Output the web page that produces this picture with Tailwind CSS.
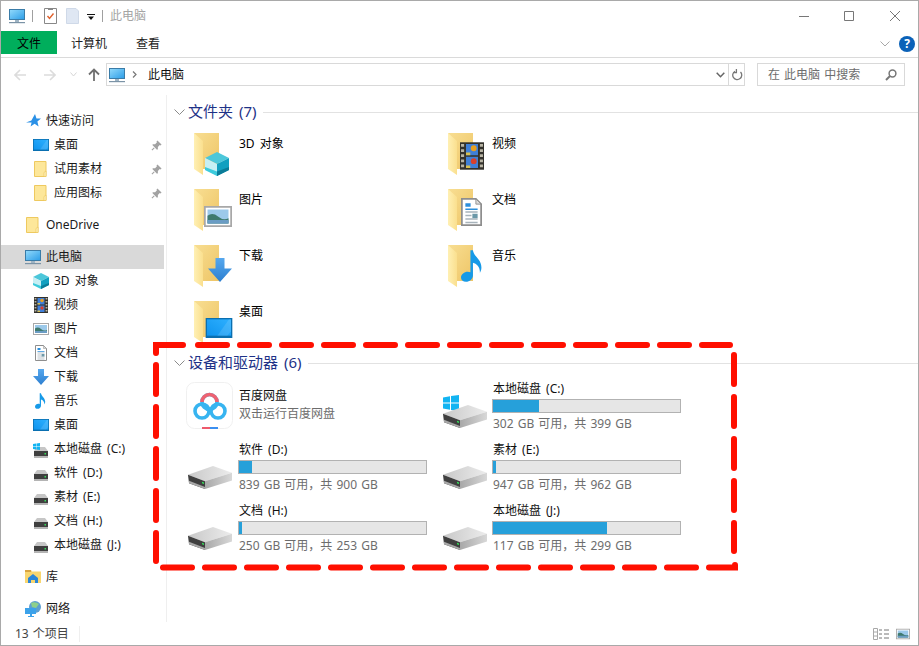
<!DOCTYPE html>
<html lang="zh-CN">
<head>
    <meta charset="UTF-8">
    <meta name="viewport" content="width=device-width, initial-scale=1.0">
    <title>此电脑</title>
    <script src="https://cdn.jsdelivr.net/npm/@tailwindcss/browser@4"></script>
</head>
<body class="bg-white font-['Noto_Sans','Noto_Sans_CJK_SC',sans-serif] text-[12px] text-black [word-spacing:2px]">
    <!-- shared icons -->
    <svg class="absolute w-0 h-0">
        <defs>
            <linearGradient id="gBack" x1="0" y1="0" x2="1" y2="1"><stop offset="0" stop-color="#f8de92"/><stop offset="1" stop-color="#eec566"/></linearGradient>
            <linearGradient id="gFlap" x1="0" y1="0" x2="1" y2="0"><stop offset="0" stop-color="#fff0b4"/><stop offset="1" stop-color="#fadf8e"/></linearGradient>
            <linearGradient id="gArrow" x1="0" y1="0" x2="0" y2="1"><stop offset="0" stop-color="#56a8ee"/><stop offset="1" stop-color="#2d7fd0"/></linearGradient>
            <linearGradient id="gScreen" x1="0" y1="0" x2="1" y2="1"><stop offset="0" stop-color="#8fd8fb"/><stop offset="1" stop-color="#2f9fe8"/></linearGradient>
            <linearGradient id="gDesk" x1="0" y1="1" x2="1" y2="0"><stop offset="0" stop-color="#0f94ee"/><stop offset="1" stop-color="#2eb0ff"/></linearGradient>
            <linearGradient id="gTop" x1="0" y1="0" x2="1" y2="0"><stop offset="0" stop-color="#c8c8c8"/><stop offset="1" stop-color="#ececec"/></linearGradient>
            <linearGradient id="gSide" x1="0" y1="0" x2="1" y2="0"><stop offset="0" stop-color="#a8a8a8"/><stop offset="1" stop-color="#d8d8d8"/></linearGradient>
        </defs>
        <symbol id="folder" viewBox="0 0 44 48">
            <path d="M0 0H25V36H9Z" fill="url(#gBack)"/>
            <path d="M0 0L9 8V42L0 36Z" fill="url(#gFlap)"/>
        </symbol>
        <symbol id="pc" viewBox="0 0 16 16">
            <path d="M0 1H16V12H0Z" fill="#3a7ca8"/>
            <path d="M1 2H15V11H1Z" fill="url(#gScreen)"/>
            <path d="M6 12H10V14H6Z" fill="#9fb4c4"/>
            <path d="M0 14H16V15.2H0Z" fill="#7b93a6"/>
        </symbol>
        <symbol id="hdd" viewBox="0 0 44 24" preserveAspectRatio="none">
            <path d="M0 9L25 0L44 7L17 16Z" fill="url(#gTop)"/>
            <path d="M0 9L17 16V24L1 18Z" fill="#3f3f3f"/>
            <path d="M1 15.5L17 22V24L1 18Z" fill="#a8a8a8"/>
            <path d="M17 16L44 7V15L17 24Z" fill="url(#gSide)"/>
            <path d="M14 16.5L16 17.2V18.8L14 18.1Z" fill="#35e05a"/>
        </symbol>
        <symbol id="hddsmall" viewBox="0 0 14 11">
            <path d="M3 0H11L14 4H0Z" fill="#c6c6c6"/>
            <path d="M0 4H14V9H0Z" fill="#3f3f3f"/>
            <path d="M0 9H14V11H0Z" fill="#b4b4b4"/>
            <path d="M10.5 6H12V7.5H10.5Z" fill="#35e05a"/>
        </symbol>
        <symbol id="winflag" viewBox="0 0 16 16">
            <path d="M0 2.4L7 1.2V7.4H0ZM8 1L16 0V7.4H8ZM0 8.4H7V14.8L0 13.6ZM8 8.4H16V16L8 15Z" fill="#12b4f2"/>
        </symbol>
        <symbol id="smallfolder" viewBox="0 0 16 16">
            <path d="M1.5 .5H13V15.5H1.5Z" fill="#fde79a" stroke="#eec95f"/>
            <path d="M13 10V15.5H11V11.5Z" fill="#fff3c0" stroke="#eec95f" stroke-width=".7"/>
        </symbol>
        <symbol id="pin" viewBox="0 0 12 12">
            <path d="M7 .5L11.5 5L10.5 6L9.5 5.5L7.5 7.5V10L6.5 10.5L1.5 5.5L2 4.5H4.5L6.5 2.5L6 1.5Z" fill="#a2a2a2"/>
            <path d="M3.5 8.5L1 11" stroke="#a2a2a2" stroke-width="1.2"/>
        </symbol>
        <symbol id="desk" viewBox="0 0 16 12">
            <path d="M0 0H16V12H0Z" fill="#0a6fb0"/>
            <path d="M.8 .8H15.2V10.6H.8Z" fill="url(#gDesk)"/>
            <path d="M7 10.6L14 .8H15.2V8L13 10.6Z" fill="#fff" opacity=".12"/>
        </symbol>
        <symbol id="cube" viewBox="0 0 16 16">
            <path d="M8 0L16 4L8 8L0 4Z" fill="#4cc7da"/>
            <path d="M0 4L8 8V16L0 12Z" fill="#c6eff4"/>
            <path d="M0 10L8 13V16L0 12Z" fill="#3ccbdc"/>
            <path d="M16 4V12L8 16V8Z" fill="#12a0c0"/>
            <path d="M16 10V12L8 16V13Z" fill="#0b7c98"/>
        </symbol>
        <symbol id="film" viewBox="0 0 14 16">
            <path d="M0 0H14V16H0Z" fill="#33312c"/>
            <path d="M.6 1H2.4V2.6H.6ZM.6 4H2.4V5.6H.6ZM.6 7H2.4V8.6H.6ZM.6 10H2.4V11.6H.6ZM.6 13H2.4V14.6H.6ZM11.6 1H13.4V2.6H11.6ZM11.6 4H13.4V5.6H11.6ZM11.6 7H13.4V8.6H11.6ZM11.6 10H13.4V11.6H11.6ZM11.6 13H13.4V14.6H11.6Z" fill="#b8b4a4"/>
            <path d="M3.5 1H10.5V7.5H3.5ZM3.5 8.5H10.5V15H3.5Z" fill="#3f7fd8"/>
            <circle cx="8" cy="3.5" r="1.7" fill="#e8a020"/>
            <circle cx="8" cy="11" r="1.7" fill="#d8402c"/>
            <path d="M3.5 6H6V7.5H3.5ZM3.5 13.5H6V15H3.5Z" fill="#d8c050"/>
        </symbol>
        <symbol id="pic" viewBox="0 0 16 12">
            <path d="M0 0H16V12H0Z" fill="#a8a8a8"/>
            <path d="M1 1H15V11H1Z" fill="#fff"/>
            <path d="M2 2H14V10H2Z" fill="#9cc9ea"/>
            <path d="M2 5.5Q5 3.5 8 6T14 7V10H2Z" fill="#3f7a6e"/>
            <path d="M2 8H14V10H2Z" fill="#6a9cc4"/>
        </symbol>
        <symbol id="doc" viewBox="0 0 12 16">
            <path d="M.5 .5H8.5L11.5 3.5V15.5H.5Z" fill="#fff" stroke="#8e8e8e"/>
            <path d="M8.5 .5V3.5H11.5Z" fill="#dcdcdc" stroke="#8e8e8e" stroke-width=".5"/>
            <path d="M2.5 3H5.5V5H2.5ZM2.5 6H9.5V6.8H2.5Z" fill="#2c8fdc"/>
            <path d="M2.5 8H9.5M2.5 10H6M2.5 12H9.5M2.5 14H9.5" stroke="#a8b4bc" stroke-width=".8"/>
            <path d="M6.5 9H9.5V11.5H6.5Z" fill="#6c98a8"/>
        </symbol>
        <symbol id="down" viewBox="0 0 16 16">
            <path d="M5 0H11V7H16L8 16L0 7H5Z" fill="url(#gArrow)"/>
        </symbol>
        <symbol id="note" viewBox="0 0 14 20">
            <path d="M6 0H7.6C8 4 13 5.5 13 11C13 12.5 12.5 13.5 12 14.5C12.3 11 10 8.5 7.6 8V16C7.6 18.3 5.4 20 3.2 20C1.2 20 0 18.9 0 17.3C0 15.2 2.2 13.6 4.2 13.6C4.9 13.6 5.5 13.8 6 14Z" fill="#169ae8"/>
        </symbol>
    </svg>

    <div class="relative w-[919px] h-[646px] flex flex-col border border-[#a9a9a9] overflow-hidden">
        <!-- title bar -->
        <div class="h-[30px] flex items-center shrink-0 pl-2">
            <svg class="w-4 h-4"><use href="#pc"/></svg>
            <div class="w-px h-3 bg-[#a0a0a0] ml-[7px]"></div>
            <svg class="w-[13px] h-4 ml-[11px]" viewBox="0 0 13 16">
                <path d="M.5 .5H12.5V15.5H.5Z" fill="#fff" stroke="#888"/>
                <path d="M4 .5H9V2H4Z" fill="#888"/>
                <path d="M3.5 8L5.5 10.5L9.5 5.5" fill="none" stroke="#e0602c" stroke-width="1.4"/>
            </svg>
            <svg class="w-[13px] h-4 ml-[9px]" viewBox="0 0 13 16">
                <path d="M.5 .5H10L12.5 3V15.5H.5Z" fill="#dfe7f3" stroke="#cfd9e8"/>
            </svg>
            <svg class="w-[8px] h-[6px] ml-[8px] mt-[2px]" viewBox="0 0 8 6">
                <path d="M0 0H8V1H0ZM1 2.5H7L4 6Z" fill="#111"/>
            </svg>
            <div class="w-px h-3 bg-[#a0a0a0] ml-[7px]"></div>
            <span class="ml-[7px] text-[#a4a4a4]">此电脑</span>
            <div class="ml-auto flex items-center pr-[18px] gap-[35px]">
                <svg class="w-[10px] h-[10px]" viewBox="0 0 10 10"><path d="M0 5.5H10" stroke="#777"/></svg>
                <svg class="w-[10px] h-[10px]" viewBox="0 0 10 10"><path d="M.5 .5H9.5V9.5H.5Z" fill="none" stroke="#777"/></svg>
                <svg class="w-[10px] h-[10px] ml-px" viewBox="0 0 10 10"><path d="M0 0L10 10M10 0L0 10" stroke="#777"/></svg>
            </div>
        </div>
        <!-- ribbon tabs -->
        <div class="h-[27px] flex shrink-0 border-b border-[#dadada]">
            <div class="w-[56px] h-[23px] pt-[2px] bg-[#00ae5c] flex items-center justify-center">文件</div>
            <div class="h-[23px] pt-[2px] flex items-center ml-[14px] text-[#222]">计算机</div>
            <div class="h-[23px] pt-[2px] flex items-center ml-[29px] text-[#222]">查看</div>
            <div class="ml-auto flex items-center h-[26px] pr-[3px]">
                <svg class="w-[10px] h-[6px]" viewBox="0 0 10 6"><path d="M.5 .5L5 5L9.5 .5" fill="none" stroke="#a8a8a8"/></svg>
                <div class="ml-[9px] w-4 h-4 rounded-full bg-[#0b62b8] text-white font-bold text-[12px] leading-4 text-center">?</div>
            </div>
        </div>
        <!-- address bar -->
        <div class="h-[37px] shrink-0 flex items-start pt-[5px] pl-[13px]">
            <div class="flex items-center h-[23px]">
                <svg class="w-3 h-[12px]" viewBox="0 0 12 12"><path d="M12 6H1.5M6 1L1 6L6 11" fill="none" stroke="#dcdcdc" stroke-width="1.6"/></svg>
                <svg class="w-3 h-[12px] ml-[18px]" viewBox="0 0 12 12"><path d="M0 6H10.5M6 1L11 6L6 11" fill="none" stroke="#dcdcdc" stroke-width="1.6"/></svg>
                <svg class="w-[7px] h-[5px] ml-[14px]" viewBox="0 0 7 5"><path d="M.5 .5L3.5 4L6.5 .5" fill="none" stroke="#d6d6d6"/></svg>
                <svg class="w-3 h-[13px] ml-[11px]" viewBox="0 0 12 13"><path d="M6 13V2M1 6.5L6 1.5L11 6.5" fill="none" stroke="#707070" stroke-width="1.8"/></svg>
            </div>
            <div class="ml-[6px] w-[639px] h-[23px] border border-[#d9d9d9] flex items-center">
                <svg class="w-4 h-4 ml-[2px]"><use href="#pc"/></svg>
                <svg class="w-[5px] h-[7px] ml-[7px]" viewBox="0 0 5 7"><path d="M1 .5L4 3.5L1 6.5" fill="none" stroke="#777" stroke-width="1.2"/></svg>
                <span class="ml-[11px] text-[#111]">此电脑</span>
                <svg class="w-[9px] h-[6px] ml-auto" viewBox="0 0 9 6"><path d="M.7 .7L4.5 4.7L8.3 .7" fill="none" stroke="#666" stroke-width="1.5"/></svg>
                <div class="w-px h-[21px] bg-[#d9d9d9] ml-[3px]"></div>
                <svg class="w-[11px] h-3 ml-[3px] mr-[1px]" viewBox="0 0 11 12"><path d="M3 2.2A4.5 4.5 0 1 0 8.5 3M4.4 0V3.6H1" fill="none" stroke="#777" stroke-width="1.3"/></svg>
            </div>
            <div class="ml-[12px] w-[148px] h-[23px] border border-[#d9d9d9] flex items-center pl-[10px] pr-[7px] text-[#6d6d6d] whitespace-pre [word-spacing:1px]">
                <span>在 此电脑 中搜索</span>
                <svg class="w-3 h-3 ml-auto" viewBox="0 0 12 12"><circle cx="7.5" cy="4.5" r="3.4" fill="none" stroke="#777" stroke-width="1.5"/><path d="M5 7L1 11" stroke="#777" stroke-width="2"/></svg>
            </div>
        </div>
        <!-- main -->
        <div class="flex-1 flex min-h-0">
            <!-- navigation pane -->
            <div class="w-[166px] shrink-0 border-r border-[#efefef] pt-[14px] text-[#1a1a1a] leading-6">
                <div class="h-6 flex items-center pl-[25px]">
                    <svg class="w-[15px] h-[14px]" viewBox="0 0 15 14"><path d="M9 0L10.5 4.6H15L11.4 7.6L12.6 12.5L8.6 9.8L4.6 12.6L5.6 8.4H0L5.4 6.4L6.5 4.6Z" fill="#2a90e6"/></svg>
                    <span class="ml-[5px]">快速访问</span>
                </div>
                <div class="h-6 flex items-center pl-[32px] pr-[4px]">
                    <svg class="w-4 h-3"><use href="#desk"/></svg><span class="ml-[5px]">桌面</span>
                    <svg class="w-[11px] h-[11px] ml-auto"><use href="#pin"/></svg>
                </div>
                <div class="h-6 flex items-center pl-[32px] pr-[4px]">
                    <svg class="w-4 h-4"><use href="#smallfolder"/></svg><span class="ml-[5px]">试用素材</span>
                    <svg class="w-[11px] h-[11px] ml-auto"><use href="#pin"/></svg>
                </div>
                <div class="h-6 flex items-center pl-[32px] pr-[4px]">
                    <svg class="w-4 h-4"><use href="#smallfolder"/></svg><span class="ml-[5px]">应用图标</span>
                    <svg class="w-[11px] h-[11px] ml-auto"><use href="#pin"/></svg>
                </div>
                <div class="h-2"></div>
                <div class="h-6 flex items-center pl-[24px]">
                    <svg class="w-4 h-4"><use href="#smallfolder"/></svg><span class="ml-[5px]">OneDrive</span>
                </div>
                <div class="h-2"></div>
                <div class="h-6 w-[163px] bg-[#d9d9d9] flex items-center pl-[24px]">
                    <svg class="w-4 h-4"><use href="#pc"/></svg><span class="ml-[5px]">此电脑</span>
                </div>
                <div class="h-6 flex items-center pl-[32px]"><svg class="w-4 h-4"><use href="#cube"/></svg><span class="ml-[5px]">3D 对象</span></div>
                <div class="h-6 flex items-center pl-[33px]"><svg class="w-[14px] h-4"><use href="#film"/></svg><span class="ml-[6px]">视频</span></div>
                <div class="h-6 flex items-center pl-[32px]"><svg class="w-4 h-3"><use href="#pic"/></svg><span class="ml-[5px]">图片</span></div>
                <div class="h-6 flex items-center pl-[34px]"><svg class="w-3 h-4"><use href="#doc"/></svg><span class="ml-[7px]">文档</span></div>
                <div class="h-6 flex items-center pl-[32px]"><svg class="w-4 h-4"><use href="#down"/></svg><span class="ml-[5px]">下载</span></div>
                <div class="h-6 flex items-center pl-[34px]"><svg class="w-[11px] h-4"><use href="#note"/></svg><span class="ml-[8px]">音乐</span></div>
                <div class="h-6 flex items-center pl-[32px]"><svg class="w-4 h-3"><use href="#desk"/></svg><span class="ml-[5px]">桌面</span></div>
                <div class="relative h-6 flex items-center pl-[33px]">
                    <svg class="absolute left-[32px] top-[6px] w-[7px] h-[7px]"><use href="#winflag"/></svg>
                    <svg class="w-[14px] h-[11px] mt-[7px]"><use href="#hddsmall"/></svg><span class="ml-[6px]">本地磁盘 (C:)</span>
                </div>
                <div class="h-6 flex items-center pl-[33px]"><svg class="w-[14px] h-[11px] mt-[4px]"><use href="#hddsmall"/></svg><span class="ml-[6px]">软件 (D:)</span></div>
                <div class="h-6 flex items-center pl-[33px]"><svg class="w-[14px] h-[11px] mt-[4px]"><use href="#hddsmall"/></svg><span class="ml-[6px]">素材 (E:)</span></div>
                <div class="h-6 flex items-center pl-[33px]"><svg class="w-[14px] h-[11px] mt-[4px]"><use href="#hddsmall"/></svg><span class="ml-[6px]">文档 (H:)</span></div>
                <div class="h-6 flex items-center pl-[33px]"><svg class="w-[14px] h-[11px] mt-[4px]"><use href="#hddsmall"/></svg><span class="ml-[6px]">本地磁盘 (J:)</span></div>
                <div class="h-2"></div>
                <div class="h-6 flex items-center pl-[24px]">
                    <svg class="w-4 h-4" viewBox="0 0 16 16"><path d="M0 1H6L7 2.5H16V14H0Z" fill="#f9d66f"/><path d="M0 1H6V3H0Z" fill="#d9a441"/><path d="M8 5L13 9V14H10V11H6V14H3V9Z" fill="#2b86d8"/></svg>
                    <span class="ml-[5px]">库</span>
                </div>
                <div class="h-2"></div>
                <div class="h-6 flex items-center pl-[24px]">
                    <svg class="w-4 h-4" viewBox="0 0 16 16"><circle cx="10" cy="6" r="6" fill="#5d9fd0"/><path d="M6 2Q10 0 14 3L11 7L7 6Z" fill="#8fd08a"/><path d="M0 7H11V13H7V15H9V16H3V15H5V13H0Z" fill="#3ca2ea"/></svg>
                    <span class="ml-[5px]">网络</span>
                </div>
            </div>

            <!-- content pane -->
            <div class="flex-1 pt-[5px]">
                <div class="h-6 flex items-center pl-[7px]">
                    <svg class="w-[11px] h-[7px]" viewBox="0 0 11 7"><path d="M.5 .5L5.5 5.5L10.5 .5" fill="none" stroke="#8a8a8a"/></svg>
                    <span class="ml-[3px] mb-[2px] text-[15px] text-[#1e3287]">文件夹 (7)</span>
                    <div class="flex-1 h-px bg-[#e2e2e2] ml-[7px]"></div>
                </div>
                <div class="grid grid-cols-[254px_254px] auto-rows-[56px] pl-[19px]">
                    <div class="flex">
                        <svg class="w-[44px] h-[48px] ml-[8px] mt-[9px]" viewBox="0 0 44 48"><use href="#folder" width="44" height="48"/><use href="#cube" x="11" y="19" width="24" height="24"/></svg>
                        <div class="ml-[1px] mt-[10px] h-5 leading-5">3D 对象</div>
                    </div>
                    <div class="flex">
                        <svg class="w-[44px] h-[48px] ml-[8px] mt-[9px]" viewBox="0 0 44 48"><use href="#folder" width="44" height="48"/><use href="#film" x="12" y="9" width="24" height="28" preserveAspectRatio="none"/></svg>
                        <div class="mt-[10px] h-5 leading-5">视频</div>
                    </div>
                    <div class="flex">
                        <svg class="w-[44px] h-[48px] ml-[8px] mt-[9px]" viewBox="0 0 44 48"><use href="#folder" width="44" height="48"/><use href="#pic" x="10" y="17" width="28" height="21"/></svg>
                        <div class="ml-[1px] mt-[10px] h-5 leading-5">图片</div>
                    </div>
                    <div class="flex">
                        <svg class="w-[44px] h-[48px] ml-[8px] mt-[9px]" viewBox="0 0 44 48"><use href="#folder" width="44" height="48"/><use href="#doc" x="13" y="9" width="21" height="28"/></svg>
                        <div class="mt-[10px] h-5 leading-5">文档</div>
                    </div>
                    <div class="flex">
                        <svg class="w-[44px] h-[48px] ml-[8px] mt-[9px]" viewBox="0 0 44 48"><use href="#folder" width="44" height="48"/><use href="#down" x="14" y="13" width="24" height="24"/></svg>
                        <div class="ml-[1px] mt-[10px] h-5 leading-5">下载</div>
                    </div>
                    <div class="flex">
                        <svg class="w-[44px] h-[48px] ml-[8px] mt-[9px]" viewBox="0 0 44 48"><use href="#folder" width="44" height="48"/><use href="#note" x="13" y="5" width="22" height="32"/></svg>
                        <div class="mt-[10px] h-5 leading-5">音乐</div>
                    </div>
                    <div class="flex">
                        <svg class="w-[44px] h-[48px] ml-[8px] mt-[9px]" viewBox="0 0 44 48"><use href="#folder" width="44" height="48"/><use href="#desk" x="11" y="17" width="28" height="20"/></svg>
                        <div class="ml-[1px] mt-[10px] h-5 leading-5">桌面</div>
                    </div>
                </div>

                <div class="h-[22px] mt-[4px] flex items-center pl-[7px]">
                    <svg class="w-[11px] h-[7px]" viewBox="0 0 11 7"><path d="M.5 .5L5.5 5.5L10.5 .5" fill="none" stroke="#8a8a8a"/></svg>
                    <span class="ml-[3px] mb-[2px] text-[15px] text-[#1e3287]">设备和驱动器 (6)</span>
                    <div class="flex-1 h-px bg-[#e2e2e2] ml-[7px]"></div>
                </div>
                <div class="grid grid-cols-[254px_254px] auto-rows-[61px] pl-[19px] pt-[4px]">
                    <div class="flex">
                        <svg class="w-[47px] h-[47px] mt-[4px] shrink-0" viewBox="0 0 47 47">
                            <rect x=".5" y=".5" width="46" height="46" rx="8" fill="#fff" stroke="#f0f0f0"/>
                            <circle cx="16" cy="29" r="7" fill="none" stroke="#37b4f0" stroke-width="3.6"/>
                            <circle cx="32" cy="29" r="7" fill="none" stroke="#37b4f0" stroke-width="3.6"/>
                            <circle cx="23.5" cy="20" r="7.5" fill="none" stroke="#37b4f0" stroke-width="3.6"/>
                            <path d="M16 20A7.5 7.5 0 0 1 31 20" fill="none" stroke="#ee6271" stroke-width="3.6"/>
                            <path d="M16 45H24V47H16Z" fill="#ee5a6c"/>
                            <path d="M24 45H32V47H24Z" fill="#3b8ff0"/>
                        </svg>
                        <div class="ml-[6px]">
                            <div class="mt-[8px] h-[18px] leading-5 text-[#111]">百度网盘</div>
                            <div class="h-5 leading-5 text-[#6d6d6d]">双击运行百度网盘</div>
                        </div>
                    </div>
                    <div class="flex">
                        <div class="relative w-[47px] h-[61px] shrink-0">
                            <svg class="absolute left-[3px] top-[17px] w-4 h-4"><use href="#winflag"/></svg>
                            <svg class="absolute left-[3px] top-[27px] w-[44px] h-[23px]"><use href="#hdd"/></svg>
                        </div>
                        <div class="ml-[5px] w-[189px]">
                            <div class="h-[21px] pl-[1px] leading-[22px] text-[#111]">本地磁盘 (C:)</div>
                            <div class="h-[14px] border border-[#b2b2b2] bg-[#e6e6e6]"><div class="h-full bg-[#26a0da]" style="width:46px"></div></div>
                            <div class="h-[22px] pl-[1px] leading-[22px] text-[#6d6d6d] [word-spacing:1px]">302 GB 可用，共 399 GB</div>
                        </div>
                    </div>
                    <div class="flex">
                        <div class="relative w-[47px] h-[61px] shrink-0">
                            <svg class="absolute left-[2px] top-[27px] w-[44px] h-[23px]"><use href="#hdd"/></svg>
                        </div>
                        <div class="ml-[5px] w-[189px]">
                            <div class="h-[21px] pl-[1px] leading-[22px] text-[#111]">软件 (D:)</div>
                            <div class="h-[14px] border border-[#b2b2b2] bg-[#e6e6e6]"><div class="h-full bg-[#26a0da]" style="width:13px"></div></div>
                            <div class="h-[22px] pl-[1px] leading-[22px] text-[#6d6d6d] [word-spacing:1px]">839 GB 可用，共 900 GB</div>
                        </div>
                    </div>
                    <div class="flex">
                        <div class="relative w-[47px] h-[61px] shrink-0">
                            <svg class="absolute left-[3px] top-[27px] w-[44px] h-[23px]"><use href="#hdd"/></svg>
                        </div>
                        <div class="ml-[5px] w-[189px]">
                            <div class="h-[21px] pl-[1px] leading-[22px] text-[#111]">素材 (E:)</div>
                            <div class="h-[14px] border border-[#b2b2b2] bg-[#e6e6e6]"><div class="h-full bg-[#26a0da]" style="width:3px"></div></div>
                            <div class="h-[22px] pl-[1px] leading-[22px] text-[#6d6d6d] [word-spacing:1px]">947 GB 可用，共 962 GB</div>
                        </div>
                    </div>
                    <div class="flex">
                        <div class="relative w-[47px] h-[61px] shrink-0">
                            <svg class="absolute left-[2px] top-[27px] w-[44px] h-[23px]"><use href="#hdd"/></svg>
                        </div>
                        <div class="ml-[5px] w-[189px]">
                            <div class="h-[21px] pl-[1px] leading-[22px] text-[#111]">文档 (H:)</div>
                            <div class="h-[14px] border border-[#b2b2b2] bg-[#e6e6e6]"><div class="h-full bg-[#26a0da]" style="width:3px"></div></div>
                            <div class="h-[22px] pl-[1px] leading-[22px] text-[#6d6d6d] [word-spacing:1px]">250 GB 可用，共 253 GB</div>
                        </div>
                    </div>
                    <div class="flex">
                        <div class="relative w-[47px] h-[61px] shrink-0">
                            <svg class="absolute left-[3px] top-[27px] w-[44px] h-[23px]"><use href="#hdd"/></svg>
                        </div>
                        <div class="ml-[5px] w-[189px]">
                            <div class="h-[21px] pl-[1px] leading-[22px] text-[#111]">本地磁盘 (J:)</div>
                            <div class="h-[14px] border border-[#b2b2b2] bg-[#e6e6e6]"><div class="h-full bg-[#26a0da]" style="width:114px"></div></div>
                            <div class="h-[22px] pl-[1px] leading-[22px] text-[#6d6d6d] [word-spacing:1px]">117 GB 可用，共 299 GB</div>
                        </div>
                    </div>
                </div>
            </div>
        </div>
        <!-- status bar -->
        <div class="h-[23px] shrink-0 flex items-center pl-[14px] text-[#444] [word-spacing:1px]">
            <span>13 个项目</span>
            <div class="w-px h-4 bg-[#efefef] ml-[10px]"></div>
            <svg class="ml-auto w-4 h-3" viewBox="0 0 16 12">
                <path d="M.5 .5H4.5V11.5H.5ZM.5 4H4.5M.5 8H4.5" fill="none" stroke="#a8a8a8"/>
                <path d="M6 2H9M11 2H16M6 6H9M11 6H16M6 10H9M11 10H16" stroke="#777"/>
            </svg>
            <svg class="ml-[7px] mr-[8px] w-[14px] h-3"><use href="#pic" width="14" height="12"/></svg>
        </div>

        <!-- red dashed annotation over the drives section -->
        <svg class="absolute -left-px -top-px w-[919px] h-[646px] pointer-events-none" viewBox="0 0 919 646" fill="none" stroke="#ff0f00" stroke-width="6" stroke-linecap="round">
            <path d="M156 353V345H183"/>
            <path d="M198 345H730" stroke-dasharray="29 13"/>
            <path d="M734 355V551" stroke-dasharray="29 13"/>
            <path d="M156 365V561" stroke-dasharray="29 13"/>
            <path d="M163 567.5H703" stroke-dasharray="29 13"/>
            <path d="M709 567.5H735V565"/>
        </svg>
    </div>
</body>
</html>
